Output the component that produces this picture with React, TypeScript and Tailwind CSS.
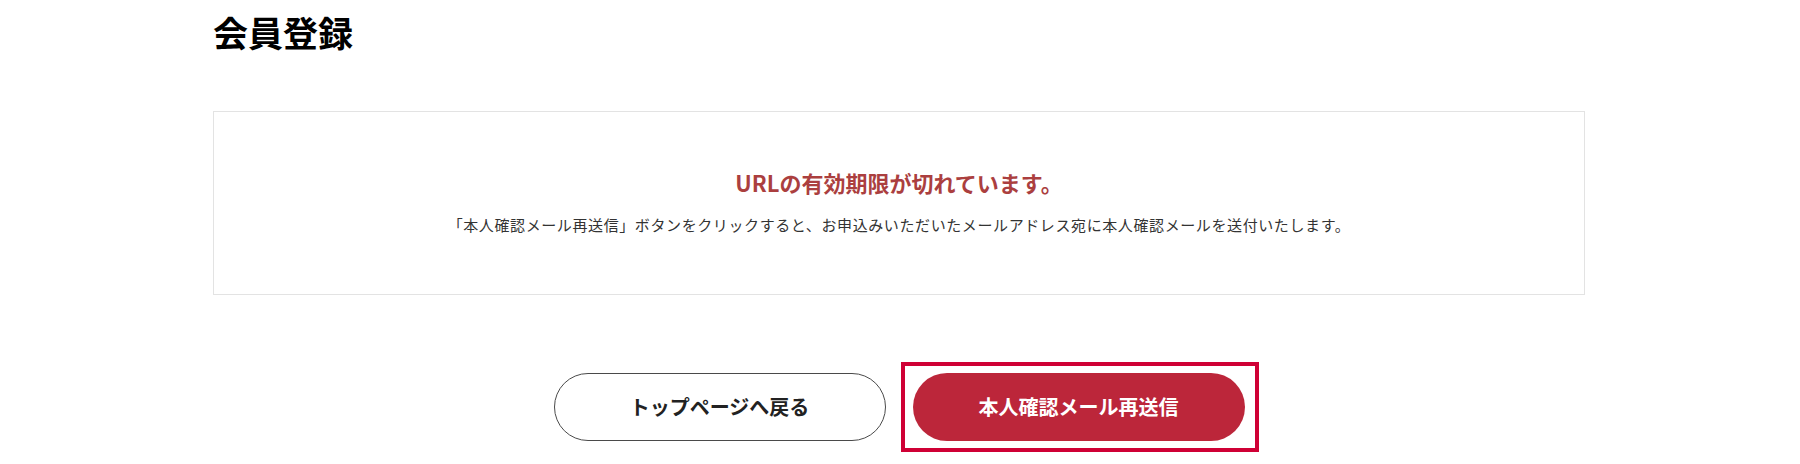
import React from "react";

const font = {
  fontFamily: '"Noto Sans CJK JP", "Noto Sans", sans-serif',
};

const App = () => {
  return (
    <div className="min-h-[464px] bg-white text-[#222]" style={font}>
      <div className="ml-[213px] w-[1372px]">
        <h1 className="pt-[5px] text-[35px] font-bold leading-[54px] text-black">
          会員登録
        </h1>

        {/* expired notice */}
        <div className="mt-[52px] border border-[#e3e3e3] pt-[54px] pb-[57px] text-center">
          <p className="text-[22px] font-bold leading-[32px] text-[#ab3f3f]">
            URLの有効期限が切れています。
          </p>
          <p className="mt-[15px] text-[15px] leading-[24px] tracking-[0.6px] text-[#333]">
            「本人確認メール再送信」ボタンをクリックすると、お申込みいただいたメールアドレス宛に本人確認メールを送付いたします。
          </p>
        </div>

        <div className="mt-[78px] flex justify-center gap-[27px]">
          <button className="flex h-[68px] w-[332px] items-center justify-center rounded-full border border-[#4a4a4a] bg-white text-[20px] font-bold text-[#222]">
            トップページへ戻る
          </button>
          <div className="relative">
            <button className="flex h-[68px] w-[332px] items-center justify-center rounded-full bg-[#bc263a] text-[20px] font-bold text-white">
              本人確認メール再送信
            </button>
            {/* focus frame */}
            <span className="pointer-events-none absolute -top-[11px] -bottom-[11px] -left-[12px] -right-[14px] border-4 border-[#cf0035]" />
          </div>
        </div>
      </div>
    </div>
  );
};

export default App;
